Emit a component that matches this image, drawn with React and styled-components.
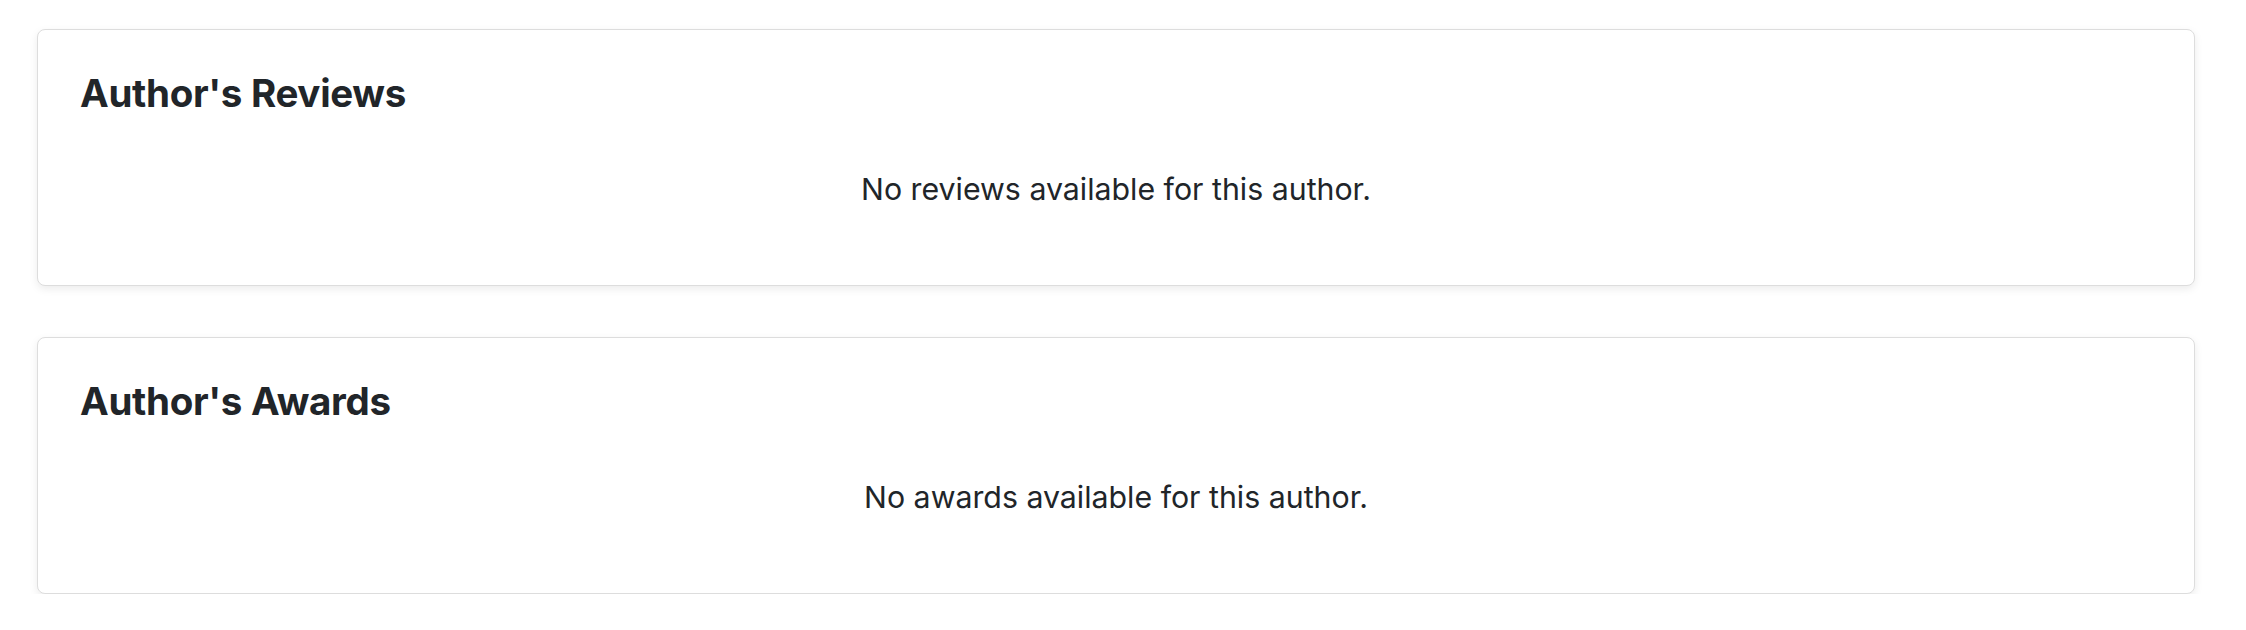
import React from "react";
import styled, { createGlobalStyle } from "styled-components";

const Global = createGlobalStyle`
  html, body { margin: 0; padding: 0; background: #ffffff; }
  body { font-family: Inter, "Noto Sans", sans-serif; color: #212529; }
`;

const Page = styled.div`
  padding: 29px 51px 0 37px;
  display: flex;
  flex-direction: column;
  gap: 51px;
`;

const Card = styled.section`
  height: 257px;
  box-sizing: border-box;
  border: 1.5px solid #dddddd;
  border-radius: 8px;
  background: #fff;
  box-shadow: 0 3px 8px rgba(0, 0, 0, 0.08);
  padding: 40px 42px 0 42px;
`;

const Title = styled.h2`
  margin: 0;
  font-size: 38.5px;
  font-weight: 700;
  line-height: 1.2;
  letter-spacing: -0.3px;
  color: #212529;
`;

const Empty = styled.p`
  margin: 51px 0 0;
  text-align: center;
  font-size: 30.3px;
  line-height: 1.5;
  color: #212529;
`;

const sections = [
  { title: "Author's Reviews", empty: "No reviews available for this author." },
  { title: "Author's Awards", empty: "No awards available for this author." },
];

export default function App() {
  return (
    <>
      <Global />
      <Page>
        {sections.map((s) => (
          <Card key={s.title}>
            <Title>{s.title}</Title>
            <Empty>{s.empty}</Empty>
          </Card>
        ))}
      </Page>
    </>
  );
}
